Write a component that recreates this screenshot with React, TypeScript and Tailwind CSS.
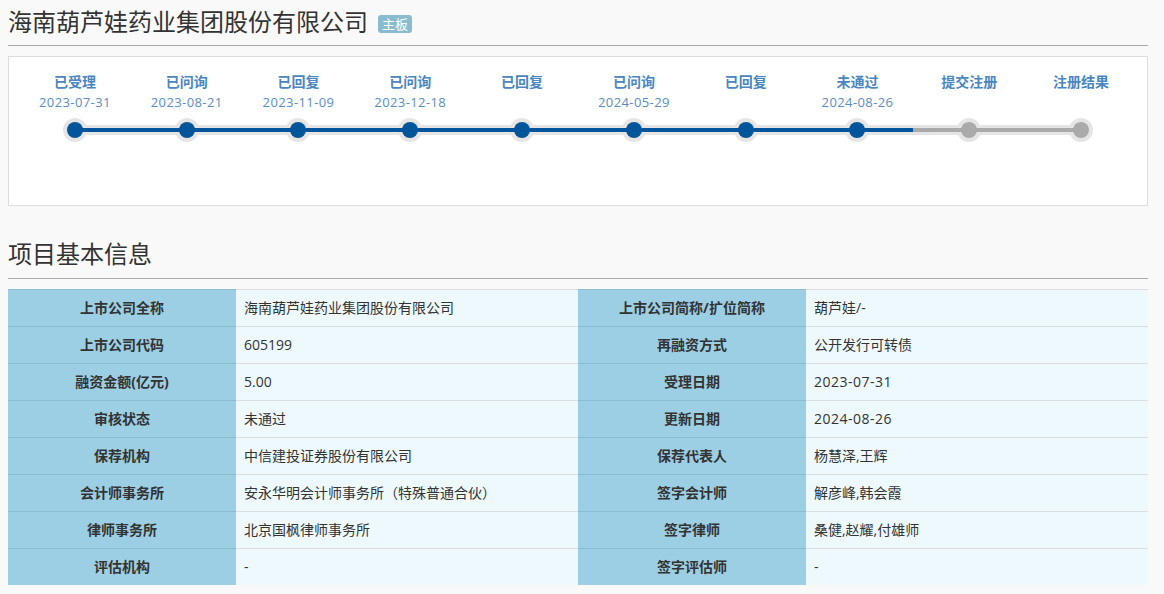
const font = { fontFamily: '"Open Sans", "Noto Sans CJK SC", sans-serif' };

const steps = [
  { label: '已受理', date: '2023-07-31', done: true },
  { label: '已问询', date: '2023-08-21', done: true },
  { label: '已回复', date: '2023-11-09', done: true },
  { label: '已问询', date: '2023-12-18', done: true },
  { label: '已回复', date: '', done: true },
  { label: '已问询', date: '2024-05-29', done: true },
  { label: '已回复', date: '', done: true },
  { label: '未通过', date: '2024-08-26', done: true },
  { label: '提交注册', date: '', done: false },
  { label: '注册结果', date: '', done: false },
];

const rows = [
  ['上市公司全称', '海南葫芦娃药业集团股份有限公司', '上市公司简称/扩位简称', '葫芦娃/-'],
  ['上市公司代码', '605199', '再融资方式', '公开发行可转债'],
  ['融资金额(亿元)', '5.00', '受理日期', '2023-07-31'],
  ['审核状态', '未通过', '更新日期', '2024-08-26'],
  ['保荐机构', '中信建投证券股份有限公司', '保荐代表人', '杨慧泽,王辉'],
  ['会计师事务所', '安永华明会计师事务所（特殊普通合伙）', '签字会计师', '解彦峰,韩会霞'],
  ['律师事务所', '北京国枫律师事务所', '签字律师', '桑健,赵耀,付雄师'],
  ['评估机构', '-', '签字评估师', '-'],
];

function Step({ step, index }: { step: (typeof steps)[number]; index: number }) {
  const last = index === steps.length - 1;
  return (
    <div className="flex flex-col items-center">
      <div className="h-[18px] text-[14px] leading-[18px] font-bold text-[#4a86c0]">{step.label}</div>
      <div className="h-[20px] mt-[1px] text-[13px] tracking-[0.4px] leading-[20px] text-[#5b8dbf]">{step.date}</div>
      <div className="relative w-full h-[24px] mt-[6px] flex items-center">
        <div className="absolute left-1/2 top-0 -translate-x-1/2 w-[24px] h-[24px] rounded-full bg-[#e5e5e5]" />
        <div className={`relative w-1/2 h-[10px] flex items-center bg-[#e5e5e5] ${index === 0 ? 'invisible' : ''}`}>
          <div className={`w-full h-[4px] ${step.done ? 'bg-[#00559b]' : 'bg-[#aaaaaa]'}`} />
        </div>
        <div className={`relative w-1/2 h-[10px] flex items-center bg-[#e5e5e5] ${last ? 'invisible' : ''}`}>
          <div className={`w-full h-[4px] ${step.done ? 'bg-[#00559b]' : 'bg-[#aaaaaa]'}`} />
        </div>
        <div className={`absolute left-1/2 top-[4px] -translate-x-1/2 w-[16px] h-[16px] rounded-full ${step.done ? 'bg-[#00559b]' : 'bg-[#aaaaaa]'}`} />
      </div>
    </div>
  );
}

function Value({ text }: { text: string }) {
  const isDate = /^\d{4}-/.test(text);
  return <div className={`bg-[#eef9fd] px-2 ${isDate ? 'tracking-[0.5px]' : ''}`}>{text}</div>;
}

export default function App() {
  return (
    <div className="w-[1164px] h-[594px] overflow-hidden bg-[#f9f9f9] pl-2 pr-4 text-[#333]" style={font}>
      <div className="h-[46px] border-b border-[#aaaaaa] flex items-center pb-[2px]">
        <h1 className="text-[24px] leading-[34px] font-normal">海南葫芦娃药业集团股份有限公司</h1>
        <span className="ml-[10px] mt-[4px] h-[18px] px-[4px] rounded-[3px] bg-[#8abccf] text-white text-[13px] leading-[18px]">主板</span>
      </div>

      <div className="mt-[10px] h-[150px] border border-[#dddddd] bg-white pl-[10px] pt-[16px]">
        <div className="grid grid-cols-10 w-[1118px]">
          {steps.map((s, i) => (
            <Step key={i} step={s} index={i} />
          ))}
        </div>
      </div>

      <div className="mt-[18px] h-[55px] border-b border-[#aaaaaa] flex items-center pt-[6px]">
        <h2 className="text-[24px] leading-[34px] font-normal">项目基本信息</h2>
      </div>

      <div className="mt-[10px]">
        {rows.map((r, i) => (
          <div
            key={i}
            className="grid grid-cols-[228px_342px_228px_342px] h-[37px] text-[14px] leading-[36px] border-t border-[#dddddd]"
          >
            <div className="bg-[#9ccfe4] text-center font-bold border-t border-[#8bbdd2] -mt-px">{r[0]}</div>
            <Value text={r[1]} />
            <div className="bg-[#9ccfe4] text-center font-bold border-t border-[#8bbdd2] -mt-px">{r[2]}</div>
            <Value text={r[3]} />
          </div>
        ))}
      </div>
    </div>
  );
}
